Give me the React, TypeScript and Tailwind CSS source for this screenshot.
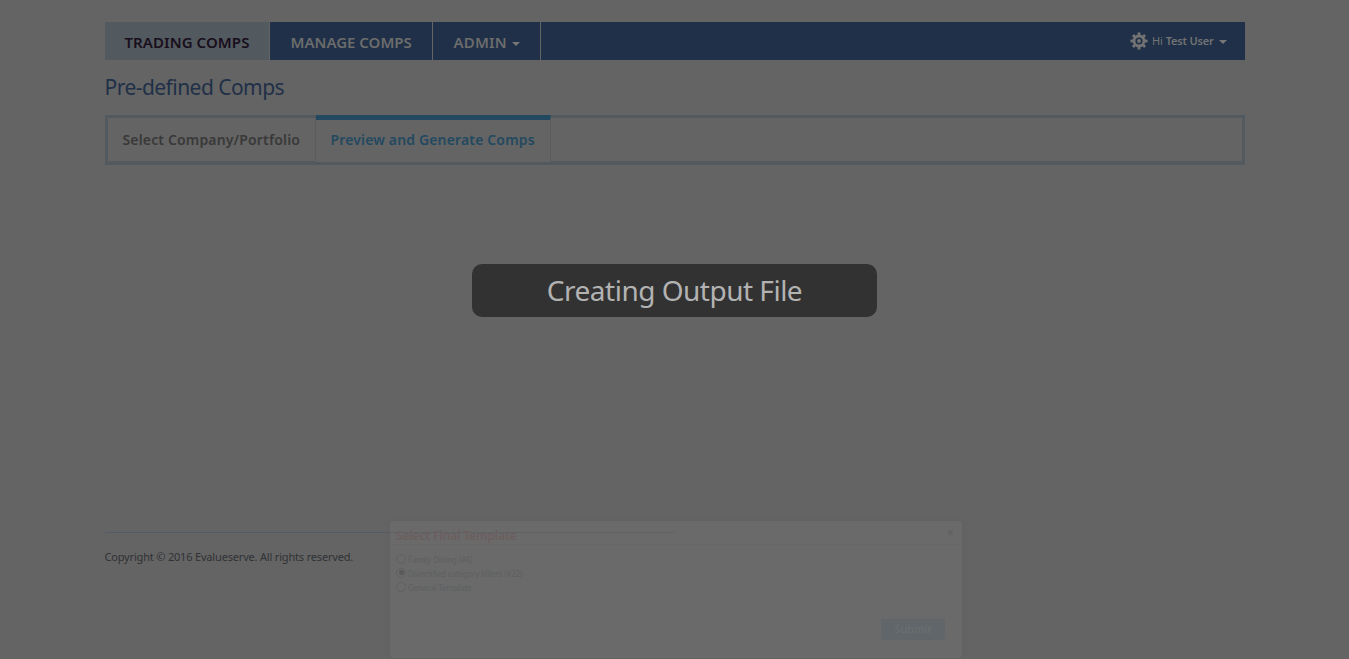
import React from "react";

function Caret({ className = "" }: { className?: string }) {
  return (
    <span
      className={`inline-block h-0 w-0 border-x-4 border-t-4 border-x-transparent border-t-[#777777] ${className}`}
    />
  );
}

function Gear() {
  return (
    <svg width="18" height="18" viewBox="0 0 18 18" fill="none" stroke="#737373">
      <circle cx="9" cy="9" r="5" strokeWidth="2.8" />
      <circle cx="9" cy="9" r="1.9" fill="#737373" stroke="none" />
      <g strokeWidth="2.8">
        {[0, 45, 90, 135, 180, 225, 270, 315].map((a) => (
          <path key={a} d="M9 .4v2.8" transform={`rotate(${a} 9 9)`} />
        ))}
      </g>
    </svg>
  );
}

function Option({ label, checked }: { label: string; checked?: boolean }) {
  return (
    <div className="flex h-[14px] items-center">
      <span className="-mt-[3px] flex size-[10px] items-center justify-center rounded-full border border-[#606162]">
        {checked && <span className="size-[5px] rounded-full bg-[#58595b]" />}
      </span>
      <span className="ml-[2px] text-[8px] leading-[14px] tracking-[-0.18px] text-[#5d6061]">{label}</span>
    </div>
  );
}

export default function App() {
  return (
    <div className="relative h-[659px] w-full overflow-hidden bg-[#646464] pt-[22px] font-['Noto_Sans',sans-serif] whitespace-nowrap">
      <div className="mx-auto flex h-[637px] w-[1140px] flex-col">
        <nav className="flex h-[38px] shrink-0 bg-[#1f3048] text-[15px] font-semibold text-[#6c6c6c]">
          <div className="flex w-[165px] items-center border-r border-[#646464] bg-[#535a5f] pt-[3px] pl-5 text-[#190e1c]">
            <span className="tracking-[0.08px]">TRADING COMPS</span>
          </div>
          <div className="flex w-[163px] items-center border-r border-[#646464] pt-[3px] pl-[21px]">MANAGE COMPS</div>
          <div className="flex w-[108px] items-center border-r border-[#646464] pt-[3px] pl-[21px]">
            <span className="tracking-[0.2px]">ADMIN</span>
            <Caret className="mt-[2px] ml-[5px]" />
          </div>
          <div className="ml-auto flex items-center pr-[18px] text-[11px] text-[#737373]">
            <Gear />
            <span className="ml-1 font-normal">Hi&nbsp;</span>
            <span className="tracking-[-0.2px]">Test User</span>
            <Caret className="mt-[2px] ml-[5px]" />
          </div>
        </nav>
        <h1 className="mt-[12px] h-[43px] shrink-0 text-[21px] leading-[31px] tracking-[-0.54px] text-[#1f3048]">
          Pre-defined Comps
        </h1>
        <div className="flex h-[50px] shrink-0 border-[3px] border-b-4 border-[#535a5f] text-[14px] font-semibold tracking-[0.15px]">
          <div className="flex w-[208px] items-center border-r border-[#595d60] pl-[15px] text-[#393939]">
            Select Company/Portfolio
          </div>
          <div className="-mt-[3px] -mb-px flex w-[235px] items-center border-t-[5px] border-r border-t-[#234960] border-r-[#595d60] bg-[#646464] pb-1 pl-[15px] text-[#234960]">
            Preview and Generate Comps
          </div>
        </div>
        <footer className="mt-[367px]">
          <div className="h-px w-[570px] bg-[#535a61]" />
          <p className="mt-[16px] text-[11px] leading-[16px] tracking-[-0.18px] text-[#303235]">
            Copyright © 2016 Evalueserve. All rights reserved.
          </p>
        </footer>
      </div>

      <div className="absolute top-[264px] left-[472px] flex h-[53px] w-[405px] items-center justify-center rounded-[10px] bg-[#323232] pb-px text-[28px] tracking-[-0.5px] text-[#b2b2b2]">
        <span>Creating Output File</span>
      </div>

      <section className="absolute top-[521px] left-[390px] flex h-[137px] w-[572px] flex-col rounded-[3px] bg-[#6a6a6a] shadow-[0_1px_5px_#606060]">
        <header className="relative flex h-[24px] items-center justify-between border-b border-[#676767] pr-[9px] pl-[6px]">
          <span className="absolute top-[11px] left-0 h-px w-[285px] bg-[#5f6265]" />
          <h2 className="relative mt-[6px] text-[12px] font-semibold tracking-[-0.14px] text-[#6b5e5f]">
            Select Final Template
          </h2>
          <svg width="5" height="5" viewBox="0 0 6 6" stroke="#606060" strokeWidth="1.5">
            <path d="M.5.5l5 5M5.5.5l-5 5" />
          </svg>
        </header>
        <div className="flex flex-col pt-[8px] pl-[6px]">
          <Option label="Family Dining (#6)" />
          <Option label="Diversified category killers (#22)" checked />
          <Option label="General Template" />
        </div>
        <button className="mt-auto mr-[17px] mb-[18px] flex h-[21px] w-[64px] items-center justify-center self-end rounded-[3px] bg-[#60666a] text-[11px] font-semibold tracking-[-0.2px] text-[#6b6d6e]">
          Submit
        </button>
      </section>
    </div>
  );
}
